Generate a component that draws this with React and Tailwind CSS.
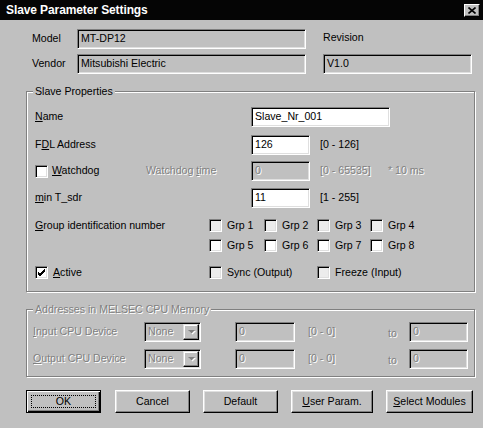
import React from "react";

const DIS = "text-[#808080] [text-shadow:1px_1px_0_#fff]";
const SUNKEN =
  "border border-t-[#808080] border-l-[#808080] border-b-white border-r-white shadow-[inset_1px_1px_0_#000,inset_-1px_-1px_0_#dfdfdf]";

function Field({ w, white, disabled, children }) {
  return (
    <div
      className={`h-[20px] ${w} ${SUNKEN} ${white ? "bg-white" : "bg-[#c0c0c0]"} flex items-center pl-[3px] shrink-0 ${
        disabled ? DIS : "text-black"
      }`}
    >
      {children}
    </div>
  );
}

function Check({ checked, light }) {
  return (
    <div
      className={`w-[13px] h-[13px] shrink-0 ${SUNKEN} ${light ? "bg-[#ececec]" : "bg-white"} flex items-center justify-center`}
    >
      {checked && (
        <svg width="9" height="9" viewBox="0 0 9 9">
          <path d="M1 4 L3 6 L8 1 M1 5 L3 7 L8 2 M1 6 L3 8 L8 3" stroke="#000" strokeWidth="1" fill="none" />
        </svg>
      )}
    </div>
  );
}

function U({ children }) {
  return <span className="underline underline-offset-[1px]">{children}</span>;
}

function Btn({ w, def, children }) {
  if (def) {
    return (
      <button
        className={`h-[23px] ${w} shrink-0 bg-[#c0c0c0] border border-black shadow-[inset_1px_1px_0_#fff,inset_-1px_-1px_0_#000,inset_-2px_-2px_0_#808080] flex items-center justify-center p-[4px]`}
      >
        <div className="w-full h-full border border-dotted border-black flex items-center justify-center leading-none">
          {children}
        </div>
      </button>
    );
  }
  return (
    <button
      className={`h-[23px] ${w} shrink-0 bg-[#c0c0c0] border border-t-white border-l-white border-b-black border-r-black shadow-[inset_-1px_-1px_0_#808080,inset_1px_1px_0_#dfdfdf] flex items-center justify-center leading-none`}
    >
      {children}
    </button>
  );
}

function Combo() {
  return (
    <div className={`h-[20px] w-[57px] shrink-0 ${SUNKEN} bg-[#c0c0c0] flex items-center justify-between pl-[3px] pr-[1px]`}>
      <span className={DIS}>None</span>
      <div className="w-[16px] h-[16px] bg-[#c0c0c0] border border-t-[#dfdfdf] border-l-[#dfdfdf] border-b-black border-r-black shadow-[inset_-1px_-1px_0_#808080,inset_1px_1px_0_#fff] flex items-center justify-center">
        <svg width="9" height="6" viewBox="0 0 9 6">
          <path d="M2 2 L9 2 L5.5 5.5 Z" fill="#fff" />
          <path d="M1 1 L8 1 L4.5 4.5 Z" fill="#808080" />
        </svg>
      </div>
    </div>
  );
}

function Group({ title, disabled, h, children }) {
  return (
    <div
      className={`relative w-[449px] ${h} border border-[#808080] shadow-[inset_1px_1px_0_#fff,1px_1px_0_#fff] shrink-0`}
    >
      <span className={`absolute -top-[8px] left-[6px] px-[2px] bg-[#c0c0c0] leading-[14px] ${disabled ? DIS : ""}`}>
        {title}
      </span>
      {children}
    </div>
  );
}

export default function App() {
  return (
    <div className="w-[483px] h-[428px] bg-[#c0c0c0] flex flex-col font-['Liberation_Sans',Arial,sans-serif] text-[10.6px] text-black overflow-hidden">
      {/* Title bar */}
      <div className="h-[20px] bg-[#050505] flex items-center justify-between pl-[6px] pr-[3px] shrink-0">
        <span className="text-white font-bold text-[12px] tracking-[-0.1px]">Slave Parameter Settings</span>
        <div className="w-[16px] h-[13px] bg-[#c0c0c0] border border-t-white border-l-white border-b-black border-r-black shadow-[inset_-1px_-1px_0_#808080] flex items-center justify-center">
          <svg width="8" height="7" viewBox="0 0 8 7">
            <path d="M0.5 0.5 L7.5 6.5 M7.5 0.5 L0.5 6.5" stroke="#000" strokeWidth="1.6" />
          </svg>
        </div>
      </div>

      <div className="flex flex-col pl-[26px]">
        {/* Model */}
        <div className="flex items-center h-[20px] mt-[9px] pl-[6px]">
          <span className="w-[45px]">Model</span>
          <Field w="w-[229px]">MT-DP12</Field>
          <span className="ml-[17px] -mt-[3px]">Revision</span>
        </div>
        {/* Vendor */}
        <div className="flex items-center h-[20px] mt-[5px] pl-[6px]">
          <span className="w-[45px]">Vendor</span>
          <Field w="w-[229px]">Mitsubishi Electric</Field>
          <div className="ml-[17px]">
            <Field w="w-[149px]">V1.0</Field>
          </div>
        </div>

        {/* Slave properties */}
        <div className="mt-[17px]">
          <Group title="Slave Properties" h="h-[201px]">
            <div className="flex flex-col pl-[8px] pt-[15px]">
              <div className="flex items-center h-[20px]">
                <span className="w-[216px]">
                  <U>N</U>ame
                </span>
                <Field w="w-[139px]" white>
                  Slave_Nr_001
                </Field>
              </div>
              <div className="flex items-center h-[20px] mt-[8px]">
                <span className="w-[216px]">
                  F<U>D</U>L Address
                </span>
                <Field w="w-[59px]" white>
                  126
                </Field>
                <span className="ml-[10px]">[0 - 126]</span>
              </div>
              <div className="flex items-center h-[20px] mt-[6px]">
                <Check />
                <span className="ml-[4px] w-[94px]">
                  <U>W</U>atchdog
                </span>
                <span className={`w-[105px] ${DIS}`}>
                  Watchdog <U>t</U>ime
                </span>
                <Field w="w-[59px]" disabled>
                  0
                </Field>
                <span className={`ml-[10px] w-[68px] ${DIS}`}>[0 - 65535]</span>
                <span className={DIS}>* 10 ms</span>
              </div>
              <div className="flex items-center h-[20px] mt-[7px]">
                <span className="w-[216px]">
                  <U>m</U>in T_sdr
                </span>
                <Field w="w-[59px]" white>
                  11
                </Field>
                <span className="ml-[10px]">[1 - 255]</span>
              </div>
              <div className="flex mt-[11px]">
                <span className="w-[174px] h-[13px] flex items-center">
                  <U>G</U>roup identification number
                </span>
                <div className="grid grid-cols-[55px_53px_53px_53px] gap-y-[7px]">
                  {[1, 2, 3, 4, 5, 6, 7, 8].map((n) => (
                    <div key={n} className="flex items-center h-[13px]">
                      <Check light={n <= 4} />
                      <span className="ml-[5px]">Grp {n}</span>
                    </div>
                  ))}
                </div>
              </div>
              <div className="flex items-center h-[13px] mt-[14px]">
                <div className="flex items-center w-[174px]">
                  <Check checked />
                  <span className="ml-[5px]">
                    <U>A</U>ctive
                  </span>
                </div>
                <div className="flex items-center w-[108px]">
                  <Check light />
                  <span className="ml-[5px]">Sync (Output)</span>
                </div>
                <div className="flex items-center">
                  <Check light />
                  <span className="ml-[5px]">Freeze (Input)</span>
                </div>
              </div>
            </div>
          </Group>
        </div>

        {/* Addresses */}
        <div className="mt-[17px]">
          <Group title="Addresses in MELSEC CPU Memory" disabled h="h-[68px]">
            <div className="flex flex-col pl-[6px] pt-[12px]">
              {[
                ["I", "nput CPU Device"],
                ["O", "utput CPU Device"],
              ].map(([a, b], i) => (
                <div key={i} className={`flex items-center h-[20px] ${i ? "mt-[7px]" : ""}`}>
                  <span className={`w-[111px] ${DIS}`}>
                    <U>{a}</U>
                    {b}
                  </span>
                  <Combo />
                  <div className="ml-[34px]">
                    <Field w="w-[60px]" disabled>
                      0
                    </Field>
                  </div>
                  <span className={`ml-[13px] w-[80px] ${DIS}`}>[0 - 0]</span>
                  <span className={`w-[21px] mt-[3px] ${DIS}`}>to</span>
                  <Field w="w-[59px]" disabled>
                    0
                  </Field>
                </div>
              ))}
            </div>
          </Group>
        </div>

        {/* Buttons */}
        <div className="flex mt-[13px]">
          <Btn w="w-[75px]" def>
            OK
          </Btn>
          <div className="ml-[14px]">
            <Btn w="w-[75px]">Cancel</Btn>
          </div>
          <div className="ml-[13px]">
            <Btn w="w-[75px]">Default</Btn>
          </div>
          <div className="ml-[13px]">
            <Btn w="w-[82px]">
              <U>U</U>ser Param.
            </Btn>
          </div>
          <div className="ml-[13px]">
            <Btn w="w-[87px]">
              <U>S</U>elect Modules
            </Btn>
          </div>
        </div>
      </div>
    </div>
  );
}
